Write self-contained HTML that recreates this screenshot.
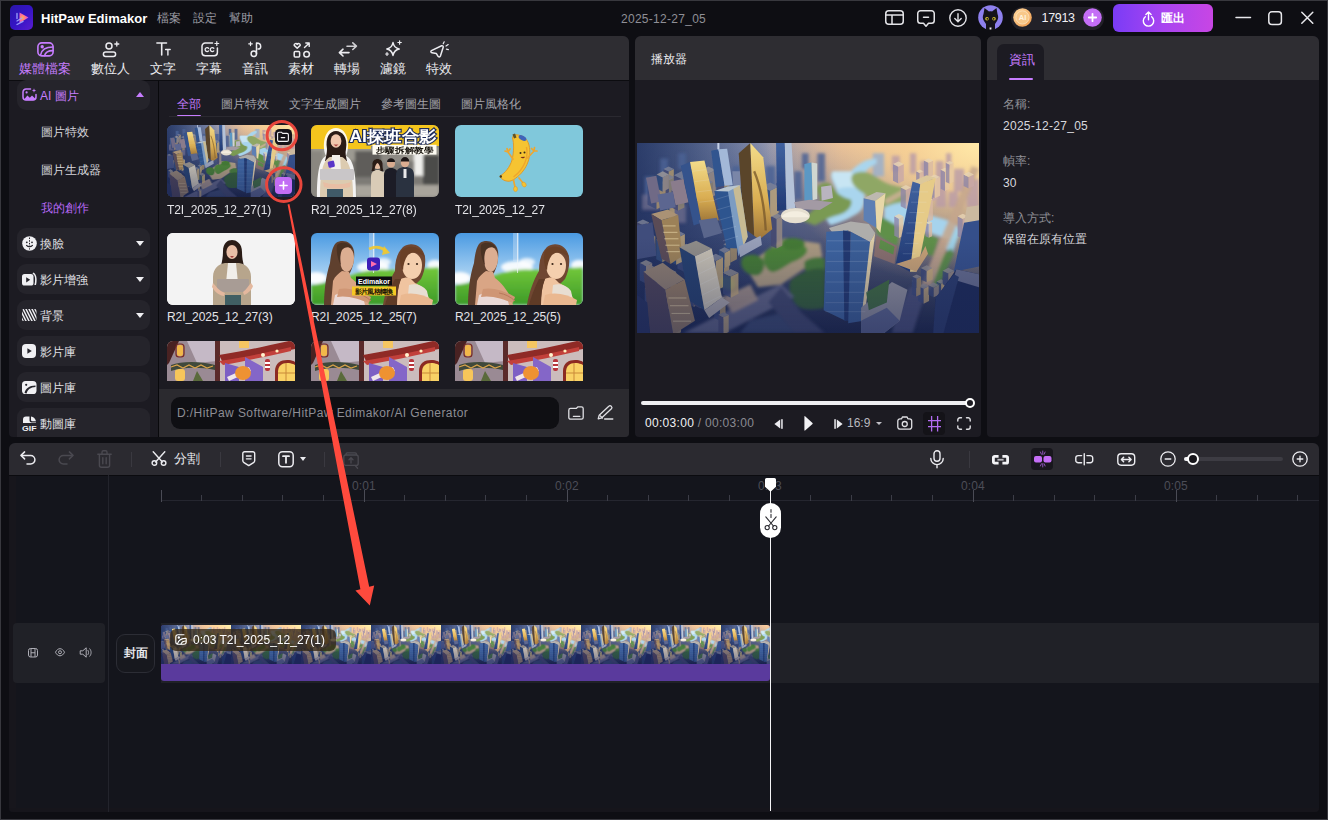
<!DOCTYPE html>
<html lang="zh-Hant">
<head>
<meta charset="utf-8">
<title>HitPaw Edimakor</title>
<style>
*{box-sizing:border-box;margin:0;padding:0}
html,body{width:1328px;height:820px;overflow:hidden;background:#0e0e13}
body{font-family:"Liberation Sans",sans-serif;font-size:12px;color:#e6e6ea;position:relative}
.abs{position:absolute}
.t{position:absolute;white-space:nowrap;line-height:1}
svg{position:absolute;overflow:visible}
.panel{position:absolute;background:#1c1b22;border-radius:6px 6px 4px 4px;overflow:hidden}
.hdr{position:absolute;left:0;top:0;right:0;height:44px;background:#2e2d32}
.sbtn{position:absolute;left:17px;width:133px;height:30px;border-radius:9px;background:#25242b}
.sbtn .t{left:23px;top:9.500px;font-size:12px;color:#e0e0e4}
.cd{position:absolute;left:119px;top:13px;width:0;height:0;border-left:4px solid transparent;border-right:4px solid transparent;border-top:5px solid #f0f0f3}
.thumb{position:absolute;width:128px;height:72px;border-radius:6px;overflow:hidden}
.thumb svg{left:0;top:0}
.tl{position:absolute;font-size:12px;color:#e4e4e8;white-space:nowrap;line-height:1;letter-spacing:-0.07px}
.tab{position:absolute;top:69px;font-size:13px;color:#ececf0;white-space:nowrap;line-height:1;transform:translateX(-50%);top:62px}
.ct{position:absolute;top:98px;font-size:12px;color:#a4a4ab;white-space:nowrap;line-height:1}
.il{position:absolute;left:1003px;font-size:12px;white-space:nowrap;line-height:1}
.rl{position:absolute;top:480px;font-size:12px;letter-spacing:.1px;color:#4c4d57;white-space:nowrap;line-height:1}
</style>
</head>
<body>
<svg width="0" height="0" style="position:absolute">
<defs>
<linearGradient id="cSky" x1="0" y1="0" x2="1" y2="0"><stop offset="0" stop-color="#56709f"/><stop offset=".35" stop-color="#8a92b0"/><stop offset=".6" stop-color="#e3c0a0"/><stop offset="1" stop-color="#ffe9ae"/></linearGradient>
<linearGradient id="cGnd" x1="0" y1="0" x2="0" y2="1"><stop offset="0" stop-color="#566a92" stop-opacity="0"/><stop offset=".35" stop-color="#3a4b7c" stop-opacity=".75"/><stop offset="1" stop-color="#1b2547"/></linearGradient>
<linearGradient id="cLeft" x1="0" y1="0" x2="1" y2="0"><stop offset="0" stop-color="#1d2b58"/><stop offset="1" stop-color="#1d2b58" stop-opacity="0"/></linearGradient>
<radialGradient id="cSun" cx="1" cy="0" r="1"><stop offset="0" stop-color="#ffe9a8"/><stop offset=".35" stop-color="#f8cf92" stop-opacity=".85"/><stop offset="1" stop-color="#f0b98c" stop-opacity="0"/></radialGradient>
<linearGradient id="cVig" x1="0" y1="0" x2="0" y2="1"><stop offset=".5" stop-color="#18224e" stop-opacity="0"/><stop offset="1" stop-color="#18224e" stop-opacity=".45"/></linearGradient><linearGradient id="cGold" x1="0" y1="0" x2="0" y2="1"><stop offset="0" stop-color="#f3dc8a"/><stop offset=".6" stop-color="#d9ad52"/><stop offset="1" stop-color="#9c7438"/></linearGradient>
<linearGradient id="cBlueA" x1="0" y1="0" x2="0" y2="1"><stop offset="0" stop-color="#5a82b8"/><stop offset="1" stop-color="#2a4580"/></linearGradient>
<linearGradient id="cBlueB" x1="0" y1="0" x2="0" y2="1"><stop offset="0" stop-color="#40629f"/><stop offset="1" stop-color="#223a74"/></linearGradient>
<filter id="cB1" x="-5%" y="-5%" width="110%" height="110%"><feGaussianBlur stdDeviation="2.2"/></filter>
<filter id="cB2" x="-10%" y="-10%" width="120%" height="120%"><feGaussianBlur stdDeviation="7"/></filter>
<symbol id="city" viewBox="0 0 1328 738" preserveAspectRatio="none">
<rect width="1328" height="738" fill="url(#cSky)"/>
<rect width="1328" height="738" fill="url(#cGnd)"/>
<rect width="520" height="738" fill="url(#cLeft)" opacity=".75"/>
<rect x="500" width="828" height="560" fill="url(#cSun)"/>
<g filter="url(#cB2)">
  <!-- far hazy skyline left -->
  <path d="M30 130h40v90H30zM90 60h30v120H90zM130 140h50v80h-50zM160 40h30v60h-30zM370 90h30v80h-30zM500 90h36v150h-36zM610 110h30v110h-30zM700 40h30v110h-30zM640 40h26v60h-26z" fill="#4a6194" opacity=".85"/>
  <path d="M20 200h70v60H20zM130 240h60v70h-60zM70 180h50v60H70z" fill="#6b6a8c" opacity=".8"/>
  <!-- hazy right skyline -->
  <path d="M990 50h30v60h-30zM1060 40h24v80h-24zM1100 70h30v60h-30zM1160 70h30v110h-30zM1200 40h20v60h-20zM1230 100h40v90h-40zM1160 170h40v80h-40zM1210 190h36v60h-36zM1290 140h38v90h-38zM1280 190h48v60h-48z" fill="#b89aa8" opacity=".8"/>
  <path d="M915 40h44v90h-44z" fill="#9fb0c8" opacity=".9"/>
  <!-- river -->
  <path d="M930 60c-40 0-70 20-100 50h-70c-20 20 10 50 20 90s-20 60-50 90l20 30c40-10 80-30 110-50s30-70 10-130c10-30 40-50 60-60z" fill="#a9d5ee"/>
  <path d="M760 110h70c20 20 30 40 40 70-30-10-70-10-90 0-10-30-30-50-20-70z" fill="#d0e8f4" opacity=".8"/>
  <path d="M960 250c30-20 60-25 90-15s60 40 100 50 80 20 100 45l-15 60c-30-20-70-30-110-45s-110-20-165-45z" fill="#a6d3ec"/>
  <path d="M1215 330l40 10-30 90-30-20z" fill="#9fd0e6"/>
  <!-- green banks -->
  <path d="M840 120c30-14 60-10 100 20s90 30 120 40l-20 50c-30 0-60 10-80 20-30-20-60-40-90-60s-50-50-30-70z" fill="#8fa765"/>
  <path d="M700 170c20-20 50-20 60 0s30 40 70 50c10 20-10 50-50 60s-70 30-90 40l-50-20c30-30 60-50 70-70s-20-40-10-60z" fill="#7a9a52"/>
  <path d="M930 280c30 10 60 30 90 50l-10 70c-30-10-60-30-80-50z" fill="#5f9049"/>
  <path d="M1110 350c20 5 40 10 60 20l-20 70c-20-5-30-10-50-20z" fill="#5f8f4a"/>
  <path d="M1180 440l40-30 10 20-60 130-20-10z" fill="#5a8a4a"/>
  <!-- right road -->
  <path d="M1300 90l28 10-190 470-40-10z" fill="#c4a68c" opacity=".85"/>
  <path d="M960 220l130-70 8 14-130 76z" fill="#cbb094" opacity=".9"/>
  <!-- plaza -->
  <path d="M420 480l150-110 140 20 10 50-160 110-90 10z" fill="#ab9a80"/>
  <path d="M410 445c30-20 70-10 80 10s0 60-30 60-70-30-50-70z" fill="#457a36"/>
  <path d="M500 420c40-30 120-40 150-20s-10 50-40 60-70 50-90 40-40-50-20-80z" fill="#4d8438"/>
  <path d="M570 375c30-10 70-5 80 10s-20 30-50 30-50-25-30-40z" fill="#447a36"/>
  <path d="M650 460c30-20 60-20 80-10v50c-30 10-60 10-80-10z" fill="#467a3a"/>
  <path d="M600 530c40-30 90-50 130-40v150c-40 10-90 10-110-10s-40-70-20-100z" fill="#355f38"/>
  <path d="M330 520c20-10 40 0 50 20s-10 40-30 30-40-30-20-50z" fill="#4a7a40"/>
  <!-- roads bottom -->
  <path d="M180 738l380-190 50 50-270 140z" fill="#5f6384"/>
  <path d="M330 600l110-50 30 60-100 50z" fill="#a8958a" opacity=".9"/>
  <path d="M400 738l40-50 130-30 90 80z" fill="#3a4870"/>
  <path d="M560 560l80 100 90 78h-120l-100-120z" fill="#3f466c"/>
  <path d="M1000 690l60-130 70-10-60 188h-80z" fill="#4a5078"/>
</g>
<g filter="url(#cB1)" opacity=".8"><path d="M520 284l22 11v115l-22 -11z" fill="#454a70"/><path d="M542 295l22 -11v115l-22 11z" fill="#9a8c84"/><path d="M520 284l22 -11l22 11l-22 11z" fill="#8f8c90"/><path d="M96 547l24 12v68l-24 -12z" fill="#34507f"/><path d="M120 559l24 -12v68l-24 12z" fill="#9a8c84"/><path d="M96 547l24 -12l24 12l-24 12z" fill="#7f8498"/><path d="M42 495l35 17v107l-35 -17z" fill="#3a4a78"/><path d="M77 512l35 -17v107l-35 17z" fill="#9a8c84"/><path d="M42 495l35 -17l35 17l-35 17z" fill="#8f8c90"/><path d="M541 154l20 10v54l-20 -10z" fill="#3a4a78"/><path d="M561 164l20 -10v54l-20 10z" fill="#b59c70"/><path d="M541 154l20 -10l20 10l-20 10z" fill="#7f8498"/><path d="M30 565l25 12v106l-25 -12z" fill="#3a4a78"/><path d="M55 577l25 -12v106l-25 12z" fill="#9a8c84"/><path d="M30 565l25 -12l25 12l-25 12z" fill="#8f8c90"/><path d="M301 601l20 10v60l-20 -10z" fill="#454a70"/><path d="M321 611l20 -10v60l-20 10z" fill="#8f8470"/><path d="M301 601l20 -10l20 10l-20 10z" fill="#a09a98"/><path d="M85 350l25 12v79l-25 -12z" fill="#2f4a7a"/><path d="M110 362l25 -12v79l-25 12z" fill="#a89068"/><path d="M85 350l25 -12l25 12l-25 12z" fill="#8f8c90"/><path d="M110 500l21 10v87l-21 -10z" fill="#454a70"/><path d="M131 510l21 -10v87l-21 10z" fill="#a89068"/><path d="M110 500l21 -10l21 10l-21 10z" fill="#8f8c90"/><path d="M0 308l23 11v56l-23 -11z" fill="#454a70"/><path d="M23 319l23 -11v56l-23 11z" fill="#c2a878"/><path d="M0 308l23 -11l23 11l-23 11z" fill="#7f8498"/><path d="M74 669l30 15v75l-30 -15z" fill="#2f4a7a"/><path d="M104 684l30 -15v75l-30 15z" fill="#8f8470"/><path d="M74 669l30 -15l30 15l-30 15z" fill="#8f8c90"/><path d="M318 430l20 10v102l-20 -10z" fill="#34507f"/><path d="M338 440l20 -10v102l-20 10z" fill="#b59c70"/><path d="M318 430l20 -10l20 10l-20 10z" fill="#8f8c90"/><path d="M103 101l20 10v109l-20 -10z" fill="#454a70"/><path d="M123 111l20 -10v109l-20 10z" fill="#b59c70"/><path d="M103 101l20 -10l20 10l-20 10z" fill="#7f8498"/><path d="M192 548l28 14v74l-28 -14z" fill="#3a4a78"/><path d="M220 562l28 -14v74l-28 14z" fill="#c2a878"/><path d="M192 548l28 -14l28 14l-28 14z" fill="#7f8498"/><path d="M392 209l26 13v103l-26 -13z" fill="#3a4a78"/><path d="M418 222l26 -13v103l-26 13z" fill="#a89068"/><path d="M392 209l26 -13l26 13l-26 13z" fill="#a09a98"/><path d="M311 110l23 11v73l-23 -11z" fill="#454a70"/><path d="M334 121l23 -11v73l-23 11z" fill="#9a8c84"/><path d="M311 110l23 -11l23 11l-23 11z" fill="#7f8498"/><path d="M102 133l22 11v77l-22 -11z" fill="#454a70"/><path d="M124 144l22 -11v77l-22 11z" fill="#8f8470"/><path d="M102 133l22 -11l22 11l-22 11z" fill="#8f8c90"/><path d="M336 393l26 13v59l-26 -13z" fill="#34507f"/><path d="M362 406l26 -13v59l-26 13z" fill="#a89068"/><path d="M336 393l26 -13l26 13l-26 13z" fill="#8f8c90"/><path d="M248 105l29 14v97l-29 -14z" fill="#2f4a7a"/><path d="M277 119l29 -14v97l-29 14z" fill="#9a8c84"/><path d="M248 105l29 -14l29 14l-29 14z" fill="#a09a98"/><path d="M130 585l33 16v67l-33 -16z" fill="#454a70"/><path d="M163 601l33 -16v67l-33 16z" fill="#b59c70"/><path d="M130 585l33 -16l33 16l-33 16z" fill="#7f8498"/><path d="M157 408l34 17v79l-34 -17z" fill="#3a4a78"/><path d="M191 425l34 -17v79l-34 17z" fill="#b59c70"/><path d="M157 408l34 -17l34 17l-34 17z" fill="#8f8c90"/><path d="M201 487l34 17v111l-34 -17z" fill="#34507f"/><path d="M235 504l34 -17v111l-34 17z" fill="#c2a878"/><path d="M201 487l34 -17l34 17l-34 17z" fill="#8f8c90"/><path d="M106 201l20 10v115l-20 -10z" fill="#2f4a7a"/><path d="M126 211l20 -10v115l-20 10z" fill="#b59c70"/><path d="M106 201l20 -10l20 10l-20 10z" fill="#7f8498"/><path d="M300 622l22 11v58l-22 -11z" fill="#3a4a78"/><path d="M322 633l22 -11v58l-22 11z" fill="#b59c70"/><path d="M300 622l22 -11l22 11l-22 11z" fill="#a09a98"/><path d="M75 376l23 11v76l-23 -11z" fill="#34507f"/><path d="M98 387l23 -11v76l-23 11z" fill="#a89068"/><path d="M75 376l23 -11l23 11l-23 11z" fill="#a09a98"/><path d="M255 151l20 10v72l-20 -10z" fill="#2f4a7a"/><path d="M275 161l20 -10v72l-20 10z" fill="#8f8470"/><path d="M255 151l20 -10l20 10l-20 10z" fill="#7f8498"/><path d="M134 184l25 12v67l-25 -12z" fill="#454a70"/><path d="M159 196l25 -12v67l-25 12z" fill="#8f8470"/><path d="M134 184l25 -12l25 12l-25 12z" fill="#7f8498"/><path d="M143 125l34 17v52l-34 -17z" fill="#454a70"/><path d="M177 142l34 -17v52l-34 17z" fill="#8f8470"/><path d="M143 125l34 -17l34 17l-34 17z" fill="#7f8498"/><path d="M319 124l20 10v59l-20 -10z" fill="#454a70"/><path d="M339 134l20 -10v59l-20 10z" fill="#a89068"/><path d="M319 124l20 -10l20 10l-20 10z" fill="#7f8498"/><path d="M318 416l22 11v59l-22 -11z" fill="#34507f"/><path d="M340 427l22 -11v59l-22 11z" fill="#c2a878"/><path d="M318 416l22 -11l22 11l-22 11z" fill="#7f8498"/><path d="M376 135l34 17v66l-34 -17z" fill="#2f4a7a"/><path d="M410 152l34 -17v66l-34 17z" fill="#8f8470"/><path d="M376 135l34 -17l34 17l-34 17z" fill="#8f8c90"/><path d="M484 169l33 16v103l-33 -16z" fill="#34507f"/><path d="M517 185l33 -16v103l-33 16z" fill="#c2a878"/><path d="M484 169l33 -16l33 16l-33 16z" fill="#7f8498"/><path d="M14 481l26 13v51l-26 -13z" fill="#34507f"/><path d="M40 494l26 -13v51l-26 13z" fill="#a89068"/><path d="M14 481l26 -13l26 13l-26 13z" fill="#8f8c90"/><path d="M118 353l34 17v103l-34 -17z" fill="#2f4a7a"/><path d="M152 370l34 -17v103l-34 17z" fill="#c2a878"/><path d="M118 353l34 -17l34 17l-34 17z" fill="#7f8498"/><path d="M85 621l32 16v115l-32 -16z" fill="#34507f"/><path d="M117 637l32 -16v115l-32 16z" fill="#8f8470"/><path d="M85 621l32 -16l32 16l-32 16z" fill="#7f8498"/><path d="M89 582l20 10v79l-20 -10z" fill="#34507f"/><path d="M109 592l20 -10v79l-20 10z" fill="#c2a878"/><path d="M89 582l20 -10l20 10l-20 10z" fill="#7f8498"/><path d="M11 466l24 12v68l-24 -12z" fill="#3a4a78"/><path d="M35 478l24 -12v68l-24 12z" fill="#9a8c84"/><path d="M11 466l24 -12l24 12l-24 12z" fill="#8f8c90"/><path d="M334 504l30 15v82l-30 -15z" fill="#3a4a78"/><path d="M364 519l30 -15v82l-30 15z" fill="#c2a878"/><path d="M334 504l30 -15l30 15l-30 15z" fill="#8f8c90"/><path d="M219 483l23 11v90l-23 -11z" fill="#3a4a78"/><path d="M242 494l23 -11v90l-23 11z" fill="#b59c70"/><path d="M219 483l23 -11l23 11l-23 11z" fill="#8f8c90"/><path d="M41 155l35 17v85l-35 -17z" fill="#3a4a78"/><path d="M76 172l35 -17v85l-35 17z" fill="#a89068"/><path d="M41 155l35 -17l35 17l-35 17z" fill="#a09a98"/><path d="M219 513l26 13v116l-26 -13z" fill="#454a70"/><path d="M245 526l26 -13v116l-26 13z" fill="#8f8470"/><path d="M219 513l26 -13l26 13l-26 13z" fill="#7f8498"/><path d="M76 122l24 12v55l-24 -12z" fill="#2f4a7a"/><path d="M100 134l24 -12v55l-24 12z" fill="#9a8c84"/><path d="M76 122l24 -12l24 12l-24 12z" fill="#a09a98"/><path d="M316 667l20 10v67l-20 -10z" fill="#454a70"/><path d="M336 677l20 -10v67l-20 10z" fill="#c2a878"/><path d="M316 667l20 -10l20 10l-20 10z" fill="#8f8c90"/><path d="M25 362l23 11v68l-23 -11z" fill="#34507f"/><path d="M48 373l23 -11v68l-23 11z" fill="#a89068"/><path d="M25 362l23 -11l23 11l-23 11z" fill="#a09a98"/><path d="M111 638l30 15v97l-30 -15z" fill="#34507f"/><path d="M141 653l30 -15v97l-30 15z" fill="#b59c70"/><path d="M111 638l30 -15l30 15l-30 15z" fill="#8f8c90"/><path d="M182 101l32 16v110l-32 -16z" fill="#34507f"/><path d="M214 117l32 -16v110l-32 16z" fill="#b59c70"/><path d="M182 101l32 -16l32 16l-32 16z" fill="#8f8c90"/><path d="M278 444l28 14v116l-28 -14z" fill="#3a4a78"/><path d="M306 458l28 -14v116l-28 14z" fill="#c2a878"/><path d="M278 444l28 -14l28 14l-28 14z" fill="#7f8498"/><path d="M229 179l26 13v99l-26 -13z" fill="#3a4a78"/><path d="M255 192l26 -13v99l-26 13z" fill="#c2a878"/><path d="M229 179l26 -13l26 13l-26 13z" fill="#a09a98"/><path d="M201 96l26 13v120l-26 -13z" fill="#2f4a7a"/><path d="M227 109l26 -13v120l-26 13z" fill="#c2a878"/><path d="M201 96l26 -13l26 13l-26 13z" fill="#a09a98"/><path d="M1084 110l14 7v53l-14 -7z" fill="#8f86a8"/><path d="M1098 117l14 -7v53l-14 7z" fill="#d9b9a4"/><path d="M1084 110l14 -7l14 7l-14 7z" fill="#e8d4b4"/><path d="M1179 104l17 8v74l-17 -8z" fill="#8f86a8"/><path d="M1196 112l17 -8v74l-17 8z" fill="#e6c8a4"/><path d="M1179 104l17 -8l17 8l-17 8z" fill="#e8d4b4"/><path d="M1114 68l18 9v72l-18 -9z" fill="#8f86a8"/><path d="M1132 77l18 -9v72l-18 9z" fill="#d9b9a4"/><path d="M1114 68l18 -9l18 9l-18 9z" fill="#e8d4b4"/><path d="M999 285l18 9v75l-18 -9z" fill="#8f86a8"/><path d="M1017 294l18 -9v75l-18 9z" fill="#e6c8a4"/><path d="M999 285l18 -9l18 9l-18 9z" fill="#e8d4b4"/><path d="M1120 309l13 6v53l-13 -6z" fill="#8f86a8"/><path d="M1133 315l13 -6v53l-13 6z" fill="#d9b9a4"/><path d="M1120 309l13 -6l13 6l-13 6z" fill="#e8d4b4"/><path d="M1199 77l15 7v74l-15 -7z" fill="#8f86a8"/><path d="M1214 84l15 -7v74l-15 7z" fill="#e6c8a4"/><path d="M1199 77l15 -7l15 7l-15 7z" fill="#e8d4b4"/><path d="M1051 300l15 7v73l-15 -7z" fill="#8f86a8"/><path d="M1066 307l15 -7v73l-15 7z" fill="#c9a8a8"/><path d="M1051 300l15 -7l15 7l-15 7z" fill="#e8d4b4"/><path d="M1245 285l20 10v77l-20 -10z" fill="#8f86a8"/><path d="M1265 295l20 -10v77l-20 10z" fill="#c9a8a8"/><path d="M1245 285l20 -10l20 10l-20 10z" fill="#e8d4b4"/><path d="M1024 173l20 10v73l-20 -10z" fill="#8f86a8"/><path d="M1044 183l20 -10v73l-20 10z" fill="#c9a8a8"/><path d="M1024 173l20 -10l20 10l-20 10z" fill="#e8d4b4"/><path d="M1128 144l21 10v72l-21 -10z" fill="#8f86a8"/><path d="M1149 154l21 -10v72l-21 10z" fill="#c9a8a8"/><path d="M1128 144l21 -10l21 10l-21 10z" fill="#e8d4b4"/><path d="M1111 219l19 9v79l-19 -9z" fill="#8f86a8"/><path d="M1130 228l19 -9v79l-19 9z" fill="#d9b9a4"/><path d="M1111 219l19 -9l19 9l-19 9z" fill="#e8d4b4"/><path d="M1135 132l21 10v73l-21 -10z" fill="#8f86a8"/><path d="M1156 142l21 -10v73l-21 10z" fill="#e6c8a4"/><path d="M1135 132l21 -10l21 10l-21 10z" fill="#e8d4b4"/><path d="M1273 314l16 8v66l-16 -8z" fill="#8f86a8"/><path d="M1289 322l16 -8v66l-16 8z" fill="#c9a8a8"/><path d="M1273 314l16 -8l16 8l-16 8z" fill="#e8d4b4"/><path d="M1038 317l13 6v78l-13 -6z" fill="#8f86a8"/><path d="M1051 323l13 -6v78l-13 6z" fill="#e6c8a4"/><path d="M1038 317l13 -6l13 6l-13 6z" fill="#e8d4b4"/><path d="M994 82l21 10v65l-21 -10z" fill="#8f86a8"/><path d="M1015 92l21 -10v65l-21 10z" fill="#c9a8a8"/><path d="M994 82l21 -10l21 10l-21 10z" fill="#e8d4b4"/><path d="M1268 122l20 10v45l-20 -10z" fill="#8f86a8"/><path d="M1288 132l20 -10v45l-20 10z" fill="#c9a8a8"/><path d="M1268 122l20 -10l20 10l-20 10z" fill="#e8d4b4"/><path d="M1102 486l23 11v44l-23 -11z" fill="#3a4a78"/><path d="M1125 497l23 -11v44l-23 11z" fill="#c2a878"/><path d="M1102 486l23 -11l23 11l-23 11z" fill="#8f8c90"/><path d="M1163 538l18 9v45l-18 -9z" fill="#3a4a78"/><path d="M1181 547l18 -9v45l-18 9z" fill="#c2a878"/><path d="M1163 538l18 -9l18 9l-18 9z" fill="#8f8c90"/><path d="M1092 556l21 10v58l-21 -10z" fill="#3a4a78"/><path d="M1113 566l21 -10v58l-21 10z" fill="#c2a878"/><path d="M1092 556l21 -10l21 10l-21 10z" fill="#8f8c90"/><path d="M1194 551l16 8v36l-16 -8z" fill="#3a4a78"/><path d="M1210 559l16 -8v36l-16 8z" fill="#c2a878"/><path d="M1194 551l16 -8l16 8l-16 8z" fill="#8f8c90"/><path d="M1067 536l17 8v52l-17 -8z" fill="#3a4a78"/><path d="M1084 544l17 -8v52l-17 8z" fill="#a89068"/><path d="M1067 536l17 -8l17 8l-17 8z" fill="#8f8c90"/><path d="M1069 519l17 8v37l-17 -8z" fill="#3a4a78"/><path d="M1086 527l17 -8v37l-17 8z" fill="#a89068"/><path d="M1069 519l17 -8l17 8l-17 8z" fill="#8f8c90"/><path d="M1132 552l20 10v37l-20 -10z" fill="#3a4a78"/><path d="M1152 562l20 -10v37l-20 10z" fill="#9a8c84"/><path d="M1132 552l20 -10l20 10l-20 10z" fill="#8f8c90"/><path d="M1187 496l22 11v53l-22 -11z" fill="#3a4a78"/><path d="M1209 507l22 -11v53l-22 11z" fill="#9a8c84"/><path d="M1187 496l22 -11l22 11l-22 11z" fill="#8f8c90"/></g>
<g filter="url(#cB1)">
  <!-- F2 far-left -->
  <path d="M0 320l60-12 15 130-75 14z" fill="#414d7c"/>
  <path d="M35 135l40-8 20 100-40 8z" fill="#6f6a86"/><path d="M130 150l50-10 20 90-50 12z" fill="#8a7c8c"/>
  <path d="M80 200l60-10 10 60-60 12z" fill="#5c6690"/>
  <!-- A -->
  <path d="M170 88l36-14 44 236-30 10z" fill="#34528c"/>
  <path d="M206 74l56-6 56 232-68 10z" fill="url(#cGold)"/>
  <!-- B -->
  <path d="M312 0h8v30h-8z" fill="#c4d0e8"/>
  <path d="M288 30l28-6 24 142-34 6z" fill="#30548f"/><path d="M316 24l34-2 22 142-32 2z" fill="#a3b8d8"/>
  <path d="M370 110h30l6 60h-32z" fill="#7a86a8"/>
  <!-- C gold tower -->
  <path d="M395 40l45-40 15 360-40-30z" fill="#5a452a"/>
  <path d="M440 0l50 55 35 280-50 40-20-15z" fill="url(#cGold)"/>
  <path d="M455 110c25 60 40 140 45 230" stroke="#7a5a2c" stroke-width="9" fill="none" opacity=".8"/>
  <!-- D -->
  <path d="M540 0h34l6 258-36 6z" fill="url(#cBlueB)"/><path d="M574 0h26l15 252-35 6z" fill="#b4c2d8"/>
  <path d="M650 82l28-6 4 146-32 2z" fill="#5c98c4"/><path d="M678 76l22 4v138l-18 4z" fill="#cfd6d0"/>
  <path d="M715 170l40-6 6 50-44 10z" fill="#b9b4c0"/>
  <path d="M610 230l60-10 90 10-50 30-90-4z" fill="#a39aa4"/>
  <!-- E -->
  <path d="M300 186l50-16 50 240-52-2z" fill="#2f558f"/>
  <path d="M350 170l50-6 30 200-36 76z" fill="#7c9cc2"/>
  <path d="M372 168l28-4 30 200-16 36z" fill="#d9c388" opacity=".8"/>
  <path d="M300 186l50-16 50-6-46 24z" fill="#b9c6d0"/>
  <path d="M395 402l85-42 5 36-85 48z" fill="#98a0b8"/>
  <path d="M240 300l70-10 20 60-70 20z" fill="#5a668c"/>
  <!-- dome -->
  <ellipse cx="615" cy="282" rx="56" ry="30" fill="#e6dfd0"/><path d="M560 288c20-30 90-30 110 0z" fill="#f4eee0"/>
  <!-- F -->
  <path d="M55 276l65-18 40 22-65 20z" fill="#aa9274"/>
  <path d="M55 276l40 24 35 170-35-20z" fill="#5a4c56"/><path d="M95 300l65-20 15 160-45 30z" fill="#9c8158"/>
  <!-- G -->
  <path d="M165 405l65-25 60 30-65 30z" fill="#8f8c88"/>
  <path d="M165 405l60 35 37 210-62-40z" fill="#27406e"/>
  <path d="M225 440l65-30 40 190-68 50z" fill="#c5bfb2"/>
  <path d="M262 650l68-50 30 20-80 60z" fill="#a8a4a8"/>
  <!-- H -->
  <path d="M25 500l75-35 85 65-75 40z" fill="#8c7c70"/>
  <path d="M25 500l85 70 30 168H50z" fill="#4c4258"/>
  <path d="M110 570l75-40 40 160-75 48h-10z" fill="#8e7762"/>
  <path d="M0 590l40 30 10 118H0z" fill="#253360"/>
  <!-- J -->
  <path d="M880 215l50-25 35 5-40 30z" fill="#bdb8b0"/>
  <path d="M880 215l45 10 5 105-50-30z" fill="#5d7fb4"/>
  <path d="M925 225l40-30-20 155-15-20z" fill="#e8d7a8"/>
  <!-- mid low building -->
  <path d="M930 360l80 40-10 70-80-30z" fill="#8a6f6e"/><path d="M945 375l55 28-5 30-55-24z" fill="#5d8c4a"/>
  <!-- K -->
  <path d="M1070 150l55-25 35 10-60 25z" fill="#dcc89c"/>
  <path d="M1070 150l30 10-40 340-55-30z" fill="url(#cBlueB)"/>
  <path d="M1100 160l60-25-60 305-15 60-25 0z" fill="#e6cb88"/>
  <path d="M1005 470l80 30 45-70-10-30-20 40z" fill="#c8a276"/>
  <!-- I front blue -->
  <path d="M745 330l85-25 70 10 25 35-20 35-85-45-60 10z" fill="#aeadab"/>
  <path d="M735 345l85-5-10 350-85-40z" fill="#3e649f"/>
  <path d="M800 340l30 5-5 345-20 0z" fill="#20396f"/>
  <path d="M830 345l75 40-25 305-60 10z" fill="#3a5e98"/>
  <path d="M905 385l20-35-45 350-10-10z" fill="#dccba4"/>
  <!-- low bottom right -->
  <path d="M870 640l120-100 60 30-30 120-60 48h-90z" fill="#8c8c9a"/>
  <path d="M890 580l90-50-10 90-70 30z" fill="#3f6a40"/>
  <path d="M870 690l100-50 50 50-60 48h-90z" fill="#5a648c"/>
  <!-- right edge -->
  <path d="M1280 250l48-8v60l-58 10z" fill="#cbb9a0"/>
  <path d="M1270 310l58-10v180l-98 20z" fill="#34508a"/>
  <path d="M1240 490l88 20v228h-160l-10-130z" fill="#1f2c58"/>
  <path d="M1240 490l88 20v50l-100-30z" fill="#636a8c"/>
  <path d="M1160 600l70-90 20 10-60 218h-40z" fill="#2a3a6c"/>
</g>
<g stroke="#e4ecf8" stroke-width="2" opacity=".3">
  <path d="M738 380h185M737 420h180M736 460h176M735 500h172M734 540h168M733 580h164M732 620h160M731 655h156"/>
  <path d="M1068 190h62M1064 230h60M1058 270h58M1052 310h56M1046 350h54M1040 390h52M1032 430h50"/>
  <path d="M230 470l66-32M238 510l66-32M246 550l66-32M254 590l66-32M262 625l66-32"/>
  <path d="M304 220l52-16M310 260l54-16M318 300l56-16M326 340l58-16M334 380l58-18"/>
  <path d="M215 110l54-7M224 150l56-7M233 190l58-7M242 230l60-7"/>
</g>
<g fill="#f3e2b2" opacity=".55">
  <rect x="100" y="320" width="50" height="4"/><rect x="102" y="345" width="55" height="4"/><rect x="106" y="370" width="55" height="4"/><rect x="110" y="395" width="55" height="4"/><rect x="114" y="420" width="52" height="4"/>
  <rect x="122" y="600" width="70" height="4"/><rect x="128" y="630" width="72" height="4"/><rect x="134" y="660" width="72" height="4"/><rect x="140" y="690" width="70" height="4"/>
</g>
<rect width="1328" height="738" fill="url(#cVig)"/>
</symbol>
</defs>
</svg>

<svg width="0" height="0" style="position:absolute">
<defs>
<filter id="tB" x="-10%" y="-10%" width="120%" height="120%"><feGaussianBlur stdDeviation="0.7"/></filter>
<filter id="tB2" x="-10%" y="-10%" width="120%" height="120%"><feGaussianBlur stdDeviation="1.6"/></filter>
<linearGradient id="gSky" x1="0" y1="0" x2="0" y2="1"><stop offset="0" stop-color="#4a9ae2"/><stop offset=".5" stop-color="#9ccaf0"/><stop offset="1" stop-color="#d0e6f4"/></linearGradient>
<linearGradient id="gHill" x1="0" y1="0" x2="0" y2="1"><stop offset="0" stop-color="#74c83a"/><stop offset="1" stop-color="#3c9a28"/></linearGradient>
<!-- girls pair -->
<symbol id="girls" viewBox="0 0 128 72">
  <rect width="128" height="72" fill="url(#gSky)"/>
  <g filter="url(#tB2)">
    <ellipse cx="5" cy="45" rx="11" ry="6" fill="#fff" opacity=".95"/>
    <ellipse cx="62" cy="34" rx="16" ry="6" fill="#fff" opacity=".9"/><ellipse cx="72" cy="29" rx="8" ry="4" fill="#fff" opacity=".8"/>
    <ellipse cx="124" cy="32" rx="8" ry="5" fill="#fff" opacity=".9"/>
    <path d="M0 52c14-2 30-6 44-11s26-5 38-4 30-2 46-3v38H0z" fill="url(#gHill)"/>
  </g>
  <rect x="58" y="0" width="6" height="28" fill="#e4eef8" opacity=".35"/><rect x="62" y="0" width="1" height="40" fill="#f2f6fa" opacity=".7"/>
  <g filter="url(#tB)">
    <!-- left girl -->
    <path d="M25 10c6-4 16-2 18 8 1 8-1 16-4 22l-8 6-6 26H13c0-14 2-30 6-42 1-8 2-16 6-20z" fill="#5f3f2e"/>
    <path d="M31 14c7-2 12 3 12 11 0 7-3 13-7 14-4 0-7-5-7-12 0-5 0-10 2-13z" fill="#dcae92"/>
    <path d="M26 12c3-3 12-4 16 4-4-3-9-2-11 1-2 4-2 10-1 16-3-6-5-14-4-21z" fill="#4a3024"/>
    <path d="M31 38l7 1 2 6c6 4 12 12 16 20l2 7H20l2-24c2-5 6-8 9-10z" fill="#d9a585"/>
    <path d="M24 62c8-4 20-4 28 2l2 8H22z" fill="#ead9d6"/>
    <path d="M28 56c10-2 22 2 32 8l-2 6c-10-4-22-8-32-6z" fill="#cf9674"/>
    <path d="M44 60c6 1 12 4 16 8" stroke="#b8785c" stroke-width="1" fill="none"/>
    <!-- right girl -->
    <path d="M92 14c8-6 20-2 22 10 1 8-1 16-4 22l-6 6c-8 0-14 4-18 20H72c2-12 6-24 12-34 0-10 2-18 8-24z" fill="#6f4630"/>
    <path d="M95 20c8-3 16 2 16 12 0 8-4 14-10 14s-10-6-10-14c0-5 1-9 4-12z" fill="#f4cfae"/>
    <path d="M90 18c6-7 20-6 24 6-6-5-12-6-17-2-3 4-5 10-5 16-3-6-4-14-2-20z" fill="#6a4028"/>
    <circle cx="97.500" cy="31" r="1.100" fill="#3a2418"/><circle cx="106" cy="31" r="1.100" fill="#3a2418"/>
    <path d="M90 46c4-2 8-2 10 0l4 4c6 2 12 8 14 16l1 6H86c0-10 1-20 4-26z" fill="#f0c4a0"/>
    <path d="M98 52c6-2 14 0 18 6l3 14H96z" fill="#e8ded2"/>
    <path d="M90 62c10-3 22-1 32 5l-1 5H88z" fill="#eab890"/>
    <path d="M84 46c-4 8-8 18-10 26h12c0-10 1-18 4-26z" fill="#5f3a28"/>
  </g>
</symbol>
<!-- xmas house -->
<symbol id="xmas" viewBox="0 0 128 40">
  <rect width="128" height="40" fill="#cbbcbc"/>
  <g filter="url(#tB)">
    <rect x="0" y="0" width="50" height="40" fill="#9a8a94"/>
    <path d="M0 0h12L2 22 0 24z" fill="#4a2422"/>
    <path d="M20 0h30v20L30 22z" fill="#cfc4d2" opacity=".8"/>
    <rect x="48" y="0" width="5" height="40" fill="#5a2c2a"/>
    <path d="M52 14C76 10 100 5 122 0h6v8C106 12 80 18 56 22z" fill="#8f2a26"/>
    <path d="M52 20C78 16 102 11 124 6v4C102 15 78 20 56 24z" fill="#c2413a"/>
    <rect x="10" y="4" width="6" height="11" rx="2" fill="#f2b84a"/><rect x="9" y="3" width="8" height="13" rx="3" fill="none" stroke="#7a2c22" stroke-width="1.2"/>
    <rect x="8" y="28" width="10" height="12" rx="3" fill="#f7c65a"/>
    <rect x="72" y="0" width="10" height="7" fill="#f5c662"/>
    <path d="M4 24c10-4 30-4 44 0v5c-14-3-32-3-44 1z" fill="#3f4a3a"/>
    <path d="M4 26l6-2 6 3 6-3 6 3 6-3 6 3 6-2" stroke="#d9a24a" stroke-width="1.2" fill="none"/>
    <path d="M58 22l14 4v14H58z" fill="#7d5fc4"/>
    <path d="M78 16l18 10v14H78z" fill="#8466c8"/>
    <path d="M60 36l22-10 2 4-22 10z" fill="#f0e6ea"/>
    <ellipse cx="76" cy="32" rx="8" ry="7" fill="#ee9232"/>
    <circle cx="96" cy="14" r="2" fill="#fff5d0"/><circle cx="110" cy="10" r="1.6" fill="#fff1c0"/>
    <rect x="98" y="18" width="5" height="12" rx="2" fill="#b8343a"/><rect x="98" y="21" width="5" height="2" fill="#fff"/><rect x="98" y="25" width="5" height="2" fill="#fff"/>
    <path d="M108 40V30c0-8 6-11 12-11s8 2 8 2v19z" fill="#8c2c22"/>
    <path d="M111 40V31c0-6 4-9 9-9s8 2 8 2v16z" fill="#f9d266"/>
    <path d="M119 22v18M111 32h17" stroke="#c98a3a" stroke-width="1"/>
    <path d="M30 30l6 10h-10z" fill="#5a6a3a"/>
  </g>
</symbol>
</defs>
</svg>

<!-- window border -->
<div class="abs" style="left:0;top:0;width:1328px;height:820px;border:1px solid #38383e;z-index:50;pointer-events:none"></div>

<!-- ===== TITLE BAR ===== -->
<div class="t" style="left:41px;top:12px;font-size:13px;font-weight:bold;color:#fff">HitPaw Edimakor</div>
<div class="t" style="left:157px;top:12px;color:#9c9ca3">檔案</div>
<div class="t" style="left:193px;top:12px;color:#9c9ca3">設定</div>
<div class="t" style="left:229px;top:12px;color:#9c9ca3">幫助</div>
<div class="t" style="left:621px;top:13px;color:#8f8f96;letter-spacing:.28px">2025-12-27_05</div>
<div class="abs" style="left:1011px;top:6.500px;width:93px;height:23px;border-radius:12px;background:#222128"></div>
<div class="t" style="left:1041.500px;top:12px;font-size:12.500px;letter-spacing:-.3px;color:#f0f0f3">17913</div>
<div class="abs" style="left:1113px;top:4px;width:100px;height:28px;border-radius:6px;background:linear-gradient(90deg,#7a3cf6,#a844f0 50%,#c846e4)"></div>
<div class="t" style="left:1161px;top:12px;font-size:12px;font-weight:bold;color:#fff">匯出</div>
<!-- logo -->
<svg style="left:10px;top:5px" width="23" height="25" viewBox="0 0 23 25">
<defs><linearGradient id="lg1" x1="0" y1="0" x2="1" y2="1"><stop offset="0" stop-color="#2a16a8"/><stop offset=".5" stop-color="#3414c4"/><stop offset="1" stop-color="#5a1cd0"/></linearGradient>
<radialGradient id="lg2" cx=".35" cy=".5" r=".7"><stop offset="0" stop-color="#ffb347"/><stop offset=".45" stop-color="#ff6f9a"/><stop offset="1" stop-color="#c64af0"/></radialGradient></defs>
<rect width="23" height="25" rx="5" fill="url(#lg1)"/>
<path d="M9.500 7.500l9 5-9 5.500z" fill="url(#lg2)"/>
<path d="M7 8.500v5M7 16l5-3M7 19.500l6-3.200" stroke="#9fa8ff" stroke-width="1.400" stroke-linecap="round" opacity=".9"/>
</svg>
<!-- layout icon -->
<svg style="left:885px;top:10px" width="19" height="15" viewBox="0 0 19 15" fill="none" stroke="#e4e4e8" stroke-width="1.500"><rect x=".75" y=".75" width="17.500" height="13.500" rx="3"/><path d="M.75 5h17.500M7 5v9.250"/></svg>
<!-- chat icon -->
<svg style="left:917px;top:9.500px" width="18" height="18" viewBox="0 0 18 18" fill="none" stroke="#e4e4e8" stroke-width="1.500" stroke-linejoin="round"><path d="M3.500 .75h11a2.750 2.750 0 0 1 2.750 2.750v7a2.750 2.750 0 0 1-2.750 2.750h-3l-2.500 3-2.500-3h-3A2.750 2.750 0 0 1 .75 10.500v-7A2.750 2.750 0 0 1 3.500 .75z"/><path d="M6.500 7.200h5" stroke-linecap="round"/></svg>
<!-- download -->
<svg style="left:949px;top:8.500px" width="18" height="18" viewBox="0 0 18 18" fill="none" stroke="#e4e4e8" stroke-width="1.400" stroke-linecap="round" stroke-linejoin="round"><circle cx="9" cy="9" r="8.200"/><path d="M9 4.800v7.800M5.800 9.600L9 12.800l3.200-3.200"/></svg>
<!-- avatar -->
<svg style="left:978px;top:5px" width="25" height="25" viewBox="0 0 25 25"><circle cx="12.500" cy="12.500" r="12.300" fill="#8e80ee"/>
<path d="M5.500 9l1-6 4.500 3.500c1-.3 2-.3 3 0L18.500 3l1 6c1 2 1 5-.5 7l-2 3v6h-9v-6l-2-3c-1.500-2-1.500-5-.5-7z" fill="#15131a"/>
<circle cx="9" cy="13.800" r="1.800" fill="#d7c22c"/><circle cx="16" cy="13.800" r="1.800" fill="#d7c22c"/><circle cx="9.300" cy="13.800" r=".9" fill="#15131a"/><circle cx="15.700" cy="13.800" r=".9" fill="#15131a"/>
<path d="M11.500 22.500h2l-.2 2h-1.600z" fill="#f2f2f2"/></svg>
<!-- coin -->
<svg style="left:1013px;top:8px" width="19" height="19" viewBox="0 0 19 19"><defs><linearGradient id="cn" x1="0" y1="0" x2="1" y2="1"><stop offset="0" stop-color="#ffd9a0"/><stop offset="1" stop-color="#f09a4a"/></linearGradient></defs><circle cx="9.500" cy="9.500" r="9.300" fill="url(#cn)"/><circle cx="9.500" cy="9.500" r="6.600" fill="#f8c88a" stroke="#fbe2bd" stroke-width=".8"/><text x="9.500" y="12.400" text-anchor="middle" font-family="Liberation Sans, sans-serif" font-weight="bold" font-size="7.500" fill="#fff3df">AI</text></svg>
<!-- plus circle -->
<svg style="left:1082.500px;top:8px" width="19" height="19" viewBox="0 0 19 19"><circle cx="9.500" cy="9.500" r="9.300" fill="#c46ef6"/><path d="M9.500 5.800v7.400M5.800 9.500h7.400" stroke="#fff" stroke-width="1.800" stroke-linecap="round"/></svg>
<!-- export icon -->
<svg style="left:1142px;top:10.500px" width="13" height="14" viewBox="0 0 14 15" fill="none" stroke="#fff" stroke-width="1.500" stroke-linecap="round" stroke-linejoin="round"><path d="M7 9.500V1.200M4.200 3.800L7 1l2.800 2.800"/><path d="M3.600 6.200A5.600 5.600 0 1 0 10.400 6.200"/></svg>
<!-- window controls -->
<svg style="left:1235px;top:10px" width="80" height="16" viewBox="0 0 80 16" fill="none" stroke="#e8e8ec" stroke-width="1.500" stroke-linecap="round"><path d="M1 7.400h14.500"/><rect x="33.800" y="1.800" width="12.600" height="12.600" rx="3"/><path d="M66.800 2.300l11 11M77.800 2.300l-11 11"/></svg>


<!-- ===== PANELS (backgrounds) ===== -->
<div class="panel" style="left:9px;top:36px;width:620px;height:401px"><div class="hdr"></div>
  <div class="abs" style="left:149px;top:44px;width:1px;height:357px;background:#09090c"></div><div class="abs" style="left:0;top:44px;width:620px;height:1px;background:#0c0c10"></div>
  <div class="abs" style="left:150px;top:353px;width:470px;height:48px;background:#2b2a2f"></div>
</div>
<div class="panel" style="left:635px;top:36px;width:346px;height:401px"><div class="hdr"></div></div>
<div class="panel" style="left:987px;top:36px;width:332px;height:401px"><div class="hdr"></div></div>
<div class="panel" style="left:9px;top:443px;width:1310px;height:369px;background:#14151c">
  <div class="abs" style="left:0;top:0;width:1310px;height:32px;background:#2b2a30"></div><div class="abs" style="left:0;top:32px;width:1310px;height:1px;background:#0b0b0f"></div><div class="abs" style="left:0;top:33px;width:7px;height:336px;background:#17161c"></div><div class="abs" style="left:0;top:365px;width:1310px;height:4px;background:#16151b"></div>
  <div class="abs" style="left:99px;top:32px;width:1px;height:337px;background:#23242c"></div>
  <div class="abs" style="left:152px;top:180px;width:1158px;height:60px;background:#202127"></div>
</div>

<!-- ===== MEDIA TOOLBAR TABS ===== -->
<div class="tab" style="left:45px;color:#c77dff">媒體檔案</div>
<div class="tab" style="left:110px">數位人</div>
<div class="tab" style="left:163px">文字</div>
<div class="tab" style="left:209px">字幕</div>
<div class="tab" style="left:255px">音訊</div>
<div class="tab" style="left:301px">素材</div>
<div class="tab" style="left:347px">轉場</div>
<div class="tab" style="left:393px">濾鏡</div>
<div class="tab" style="left:439px">特效</div>
<!-- tab: media (active) -->
<svg style="left:37px;top:42px" width="17" height="15" viewBox="0 0 17 15" fill="none" stroke="#c77dff" stroke-width="1.600" stroke-linecap="round" stroke-linejoin="round"><rect x=".9" y=".9" width="15.200" height="13" rx="3.800"/><path d="M3.600 12.800C4.600 8 8.500 5 15.800 5M7.500 13.600c.8-3 3.500-5 8.400-5"/><circle cx="5.200" cy="4.800" r=".9" fill="#c77dff"/></svg>
<!-- tab: digital human -->
<svg style="left:102px;top:41px" width="18" height="16" viewBox="0 0 18 16" fill="none" stroke="#ececf0" stroke-width="1.500" stroke-linecap="round" stroke-linejoin="round"><circle cx="7" cy="5" r="3"/><path d="M3.600 11h7.800a2.200 2.200 0 0 1 0 4.400H3.600a2.200 2.200 0 0 1 0-4.400z"/><path d="M14.800 1v4M12.800 3h4" stroke-width="1.300"/></svg>
<!-- tab: text -->
<svg style="left:156px;top:42px" width="15" height="14" viewBox="0 0 15 14" fill="none" stroke="#ececf0" stroke-width="1.600" stroke-linecap="round"><path d="M.9 1h9.600M5.700 1v12"/><path d="M9.600 7.500h4.600M11.900 7.500V13" stroke-width="1.400"/></svg>
<!-- tab: CC -->
<svg style="left:201px;top:41px" width="19" height="16" viewBox="0 0 19 16" fill="none" stroke="#ececf0" stroke-width="1.500" stroke-linecap="round" stroke-linejoin="round"><path d="M11.500 2H4.200A3.200 3.200 0 0 0 1 5.200v6.400a3.200 3.200 0 0 0 3.200 3.200h9a3.200 3.200 0 0 0 3.200-3.200V7"/><path d="M7.600 7.200a2 2 0 1 0 0 2.700M12.800 7.200a2 2 0 1 0 0 2.700" stroke-width="1.300"/><path d="M15.800 .6v3.800M13.900 2.500h3.800" stroke-width="1.200"/></svg>
<!-- tab: audio -->
<svg style="left:248px;top:41px" width="14" height="17" viewBox="0 0 14 17" fill="none" stroke="#ececf0" stroke-width="1.500" stroke-linecap="round" stroke-linejoin="round"><circle cx="5.800" cy="12.800" r="2.700"/><path d="M8.500 12.800V2c1.600 0 4.200.8 4.200 3.400 0 1.600-1.300 2.600-2.600 2.600"/><path d="M2.500 1v3.600M.7 2.800h3.600" stroke-width="1.200"/></svg>
<!-- tab: materials -->
<svg style="left:293px;top:41.500px" width="18" height="16" viewBox="0 0 18 16" fill="none" stroke="#ececf0" stroke-width="1.500" stroke-linecap="round" stroke-linejoin="round"><path d="M4.200 6.200L1.200 3.400a1.600 1.600 0 0 1 3-1 1.600 1.600 0 0 1 3 1z"/><path d="M11.500 5.500L16 1.200M12.800 1h3.400v3.400" stroke-width="1.400"/><rect x="1.200" y="9.600" width="5.400" height="5.400" rx="1"/><circle cx="13.600" cy="12.300" r="2.800"/></svg>
<!-- tab: transition -->
<svg style="left:338px;top:42px" width="20" height="15" viewBox="0 0 20 15" fill="none" stroke="#ececf0" stroke-width="1.600" stroke-linecap="round" stroke-linejoin="round"><path d="M9 4.200h9.400M14.800 .9l3.600 3.300-3.600 3.300" opacity=".85"/><path d="M11 10.600H1.400M5 7.200l-3.600 3.400L5 14"/></svg>
<!-- tab: filter -->
<svg style="left:384px;top:40px" width="19" height="18" viewBox="0 0 19 18" fill="none" stroke="#ececf0" stroke-width="1.500" stroke-linejoin="round" stroke-linecap="round"><path d="M9 2.600c.8 4 2.300 5.600 6.200 6.400-3.900.8-5.400 2.400-6.200 6.400-.8-4-2.300-5.600-6.200-6.400C6.700 8.200 8.200 6.600 9 2.600z"/><path d="M15.600 .8v3.400M13.900 2.500h3.400M3 12.600v2.800M1.600 14h2.800" stroke-width="1.200"/></svg>
<!-- tab: effects -->
<svg style="left:429px;top:40.500px" width="21" height="17" viewBox="0 0 21 17" fill="none" stroke="#ececf0" stroke-width="1.500" stroke-linejoin="round" stroke-linecap="round"><path d="M2.400 9.600L12.600 4.800c1-.4 1.900.4 1.600 1.400L11.400 15c-.4 1.100-1.900 1.200-2.500.2L7.400 12.600 3 11.800c-1.200-.2-1.600-1.600-.6-2.200z"/><path d="M14.200 2.800l1-2M17 5l2.200-1.400M17.400 8.200l2 .4" stroke-width="1.200"/></svg>


<!-- ===== SIDEBAR ===== -->
<div class="sbtn" style="top:80px"><div class="t" style="color:#c77dff">AI 圖片</div><div class="cd" style="border-top:none;border-bottom:5px solid #c77dff;top:12px"></div></div>
<div class="t" style="left:41px;top:126px;font-size:12px;color:#d6d6db">圖片特效</div>
<div class="t" style="left:41px;top:164px;font-size:12px;color:#d6d6db">圖片生成器</div>
<div class="t" style="left:41px;top:202px;font-size:12px;color:#b768f5">我的創作</div>
<div class="sbtn" style="top:228px"><div class="t">換臉</div><div class="cd"></div></div>
<div class="sbtn" style="top:264px"><div class="t">影片增強</div><div class="cd"></div></div>
<div class="sbtn" style="top:300px"><div class="t">背景</div><div class="cd"></div></div>
<div class="sbtn" style="top:336px"><div class="t">影片庫</div></div>
<div class="sbtn" style="top:372px"><div class="t">圖片庫</div></div>
<div class="sbtn" style="top:408px;height:29px;border-radius:9px 9px 0 0"><div class="t">動圖庫</div></div>
<!-- side: AI image -->
<svg style="left:22px;top:88px" width="15" height="13" viewBox="0 0 15 13"><path d="M8.500 1H4a3 3 0 0 0-3 3v5a3 3 0 0 0 3 3h7a3 3 0 0 0 3-3V6.500" fill="none" stroke="#c77dff" stroke-width="1.500" stroke-linecap="round"/><path d="M2 11.500l3.400-4 2.400 2.200 2.200-2.200 3.400 3.200c-.4.900-1.300 1.500-2.400 1.500H4c-.9 0-1.600-.3-2-.7z" fill="#c77dff"/><circle cx="4.600" cy="4.400" r="1.100" fill="#c77dff"/><path d="M12 .2l.6 1.700 1.700.6-1.700.6-.6 1.700-.6-1.700-1.700-.6 1.700-.6z" fill="#c77dff"/></svg>
<!-- side: face swap -->
<svg style="left:22px;top:236px" width="15" height="15" viewBox="0 0 15 15"><circle cx="7.500" cy="7.500" r="7.300" fill="#f0f0f3"/><path d="M7.500 1.500v12" stroke="#25242b" stroke-width="1" stroke-dasharray="1.500 1.200"/><circle cx="4.800" cy="6.300" r=".9" fill="#25242b"/><circle cx="10" cy="6.300" r=".9" fill="#25242b"/><path d="M4.500 9.300c1.600 1.800 4.400 1.800 6 0" stroke="#25242b" stroke-width="1.100" fill="none" stroke-linecap="round"/></svg>
<!-- side: video enhance -->
<svg style="left:22px;top:272px" width="15" height="14" viewBox="0 0 15 14"><rect x="0" y="2" width="11.500" height="11.500" rx="2.600" fill="#f0f0f3"/><path d="M4.200 5.200l4 2.600-4 2.600z" fill="#25242b"/><path d="M11.200 .6c2 .8 3.200 3 3.400 6.200.1 2.400-.2 4.600-.6 6.200h-1.600c.5-2 .8-4 .7-6.200-.1-2.600-1-4.400-2.500-5z" fill="#f0f0f3"/></svg>
<!-- side: background -->
<svg style="left:22px;top:309px" width="15" height="12" viewBox="0 0 15 12"><defs><clipPath id="bgc"><rect width="14.500" height="12" rx="1.500"/></clipPath></defs><g clip-path="url(#bgc)" stroke="#e8e8ec" stroke-width="1.500"><path d="M-3 -2l8 16M0 -2l8 16M3 -2l8 16M6 -2l8 16M9 -2l8 16M12 -2l8 16M-6 -2l8 16"/></g></svg>
<!-- side: video lib -->
<svg style="left:22px;top:344px" width="14" height="14" viewBox="0 0 14 14"><rect width="14" height="14" rx="4" fill="#f0f0f3"/><path d="M5.400 4.200l4.400 2.800-4.400 2.800z" fill="#25242b"/></svg>
<!-- side: image lib -->
<svg style="left:22px;top:380.500px" width="15" height="13" viewBox="0 0 15 13"><rect width="14.500" height="13" rx="3.600" fill="#f0f0f3"/><path d="M2.500 12c1-4.500 4.500-7.300 11-7.500v1.600C8.500 6.400 5.600 8.600 4.600 12.500z" fill="#25242b"/><path d="M6.400 12.500c.9-2.400 3-4 7.300-4.200v1.500c-3 .2-4.700 1.100-5.500 2.900z" fill="#25242b" opacity=".0"/><circle cx="4.200" cy="3.800" r="1.100" fill="#25242b"/></svg>
<!-- side: gif lib -->
<svg style="left:22px;top:416px" width="15" height="15" viewBox="0 0 15 15"><path d="M1 7V3.500A3 3 0 0 1 4 .5h3.500v4a2 2 0 0 0 2 2H14V7z" fill="#f0f0f3"/><path d="M9 .5c2.600.5 4.400 2.200 5 4.800h-3.600A1.400 1.400 0 0 1 9 3.900z" fill="#f0f0f3"/><text x="0" y="14.600" font-family="Liberation Sans, sans-serif" font-weight="bold" font-size="7.200" fill="#f0f0f3" textLength="14.500" lengthAdjust="spacingAndGlyphs">GIF</text></svg>


<!-- ===== CONTENT TABS ===== -->
<div class="ct" style="left:177px;color:#c77dff">全部</div>
<div class="abs" style="left:177px;top:115px;width:24px;height:2px;background:#c77dff;border-radius:1px"></div>
<div class="abs" style="left:169px;top:116px;width:452px;height:1px;background:#2a2930"></div>
<div class="ct" style="left:221px">圖片特效</div>
<div class="ct" style="left:289px">文字生成圖片</div>
<div class="ct" style="left:381px">參考圖生圖</div>
<div class="ct" style="left:461px">圖片風格化</div>

<!-- ===== THUMBNAILS ===== -->
<div class="thumb" id="th1" style="left:167px;top:125px"><svg width="128" height="72"><use href="#city" width="128" height="72"/></svg></div>
<div class="thumb" id="th2" style="left:311px;top:125px"><svg width="128" height="72" viewBox="0 0 128 72">
<rect width="128" height="72" fill="#7d7b76"/>
<g filter="url(#tB2)"><rect x="0" y="22" width="128" height="14" fill="#9c9a92"/><rect x="44" y="26" width="26" height="26" fill="#5f5d5a"/><rect x="70" y="24" width="22" height="14" fill="#8d8a84"/><rect x="103" y="27" width="10" height="24" fill="#efefec"/><rect x="112" y="30" width="16" height="30" fill="#4c4b4a"/><rect x="44" y="60" width="84" height="12" fill="#a9a59c"/><rect x="0" y="26" width="12" height="46" fill="#8a8780"/></g>
<rect width="128" height="21" fill="#f4c51d"/><path d="M0 21h60v3H0z" fill="#f4c51d"/>
<g filter="url(#tB)">
 <path d="M60 72V52c0-5 3-7 6.500-7s6.500 2 6.500 7v20z" fill="#d9cbb6"/><circle cx="66.500" cy="40" r="4" fill="#e6bda2"/><path d="M61.500 40c-1-8 11-8 10 0 0 3 1 6 1 6h-3c0-3-1-7-3-8-2 1-3 5-3 8h-3s1-3 1-6z" fill="#2a1d18"/>
 <path d="M66 50l12-6 1 2-11 7z" fill="#d9cbb6"/>
 <path d="M73 72V50c0-5 3-7 7-7s7 2 7 7v22z" fill="#1d1e25"/><circle cx="80" cy="38.500" r="4" fill="#d8ab8f"/><path d="M76 37c0-5 8-5 8 0z" fill="#1c1614"/>
 <path d="M85 72V50c0-6 4-8 9-8s9 2 9 8v22z" fill="#2a3140"/><circle cx="94" cy="38" r="4.200" fill="#dbad91"/><path d="M89.800 36.500c0-6 8.400-6 8.400 0z" fill="#1c1614"/>
 <rect x="92.500" y="44" width="3" height="9" fill="#e9e9ea"/>
 <path d="M6 72c0-22 2-38 9-41-4-8-3-28 10-28s14 20 10 28c8 3 10 19 10 41z" fill="#fff" opacity=".9"/>
 <path d="M16 24c-2-12 3-18 9-18s12 6 10 18c-1 4 0 8 1 12H14c1-4 2-8 2-12z" fill="#2b1c17"/>
 <ellipse cx="25" cy="16" rx="5.400" ry="6.800" fill="#efc7ad"/><path d="M22.500 19.500h5l-2.500 2z" fill="#b04a44"/>
 <path d="M9 72c0-22 2-36 10-40h12c8 4 11 18 11 40z" fill="#dccbb0"/>
 <path d="M21 30h8l1 16h-10z" fill="#f4f0ea"/>
 <rect x="9" y="44" width="34" height="11" rx="1" fill="#c9c6c8"/>
 <path d="M12 57c8 3 20 3 28 0l-1 5c-8 2-18 2-26 0z" fill="#e8bea4"/>
 <rect x="17" y="36" width="6.500" height="6.500" rx="1.500" fill="#5a35c8" transform="rotate(-12 20 39)"/>
 <path d="M16 72V64h16v8z" fill="#3f5a68"/>
</g>
<text x="38.500" y="16.500" font-family="Liberation Sans, sans-serif" font-weight="bold" font-size="16" fill="#fff" stroke="#1d2b5a" stroke-width="2.200" paint-order="stroke" textLength="87" lengthAdjust="spacingAndGlyphs">AI探班合影</text>
<rect x="61.500" y="19.800" width="64" height="9.800" fill="#fdfbf2"/>
<text x="64.500" y="27.800" font-family="Liberation Sans, sans-serif" font-weight="bold" font-size="8" fill="#16120c" textLength="58" lengthAdjust="spacingAndGlyphs">步驟拆解教學</text>
</svg></div>
<div class="thumb" id="th3" style="left:455px;top:125px;background:#80c8db"><svg width="128" height="72" viewBox="0 0 128 72"><g filter="url(#tB)">
<path d="M58.500 10C65 9 72 12 74 20C77 33 71 47 58 55C53 58 46 55 45 51C50 48 55 42 57 35C59 27 59 18 57.500 13Z" fill="#f6c431" stroke="#e09a2a" stroke-width="1"/>
<path d="M71.500 22c2 10-2 22-13 30" stroke="#ee9e2c" stroke-width="1.400" fill="none" opacity=".8"/>
<path d="M57.500 9.500l2.500-1 1.500 4-2.500 1z" fill="#5f5228"/><circle cx="45.800" cy="51.500" r="1.200" fill="#4a3c1c"/>
<ellipse cx="67.500" cy="13" rx="4.200" ry="2.200" transform="rotate(28 67.500 13)" fill="#3f63b8"/>
<path d="M58 34l-5-7M53 27l-3-1M53 27l-1-3.500M53 27l2-3" stroke="#efa62f" stroke-width="1.700" stroke-linecap="round" fill="none"/>
<path d="M72.500 33l6.500-7M79 26l3 0M79 26l.5-3.500M79 26l-2.500-2.500" stroke="#efa62f" stroke-width="1.700" stroke-linecap="round" fill="none"/>
<path d="M58.500 55l1.500 7M64 53l4 5" stroke="#efa62f" stroke-width="1.700" stroke-linecap="round"/>
<ellipse cx="60.500" cy="64" rx="2" ry="2.600" fill="#f6c431" stroke="#e09a2a" stroke-width=".6"/><ellipse cx="69" cy="59.500" rx="2" ry="2.600" transform="rotate(-30 69 59.500)" fill="#f6c431" stroke="#e09a2a" stroke-width=".6"/>
<circle cx="65.500" cy="28" r="1" fill="#3a2a18"/><circle cx="69.500" cy="27.500" r="1" fill="#3a2a18"/><path d="M65.500 32c1.500 1.800 3.500 1.600 4.500-.3z" fill="#7a2c1c"/>
</g></svg></div>
<div class="thumb" id="th4" style="left:167px;top:233px;background:#f2f2f2"><svg width="128" height="72" viewBox="0 0 128 72"><rect width="128" height="72" fill="#f3f3f3"/><g filter="url(#tB)">
<path d="M56 18c0-8 5-11 9-11s10 3 10 12c0 6 1 10 2 14H54c1-5 2-9 2-15z" fill="#2a1c19"/>
<ellipse cx="65" cy="19" rx="5.600" ry="7" fill="#e9bfa6"/><path d="M63 23h4l-2 2z" fill="#a3413c"/>
<path d="M46 72V44c0-9 6-13 12-14h14c6 1 12 5 12 14v28z" fill="#b7a58c"/>
<path d="M61 30h8l2 20H59z" fill="#f1eee9"/>
<path d="M58 72V62h16v10z" fill="#3f5f64"/>
<rect x="50" y="46" width="32" height="13" rx="1" fill="#a89c95"/>
<path d="M46 50c3 3 6 8 12 10l-1 3c-7-1-10-6-12-9zM84 50c-3 3-4 6-8 9l1 3c5-2 8-6 9-9z" fill="#e4b89e"/>
</g></svg></div>
<div class="thumb" id="th5" style="left:311px;top:233px"><svg width="128" height="72"><use href="#girls" width="128" height="72"/>
<path d="M58 16c6-3 12-2 17 2" stroke="#f3c92c" stroke-width="2.600" fill="none" opacity=".9"/><path d="M73 13l6 7-8 2z" fill="#f3c92c" opacity=".9"/>
<rect x="56" y="24.500" width="13" height="13" rx="3" fill="#3d1fb8"/><path d="M60 28l6 3-6 3z" fill="#ff6fae"/>
<rect x="45" y="43.500" width="36" height="9" fill="#0d0d10"/><text x="63" y="50.800" text-anchor="middle" font-family="Liberation Sans, sans-serif" font-weight="bold" font-size="7" fill="#fff">Edimakor</text>
<rect x="41" y="53.500" width="44" height="9" fill="#f5c824"/><text x="63" y="60.800" text-anchor="middle" font-family="Liberation Sans, sans-serif" font-weight="bold" font-size="6.500" fill="#1c1608" textLength="38">影片風格轉換</text>
</svg></div>
<div class="thumb" id="th6" style="left:455px;top:233px"><svg width="128" height="72"><use href="#girls" width="128" height="72"/></svg></div>
<div class="thumb" id="th7" style="left:167px;top:341px;height:40px;border-radius:6px 6px 0 0"><svg width="128" height="40"><use href="#xmas" width="128" height="40"/></svg></div>
<div class="thumb" id="th8" style="left:311px;top:341px;height:40px;border-radius:6px 6px 0 0"><svg width="128" height="40"><use href="#xmas" width="128" height="40"/></svg></div>
<div class="thumb" id="th9" style="left:455px;top:341px;height:40px;border-radius:6px 6px 0 0"><svg width="128" height="40"><use href="#xmas" width="128" height="40"/></svg></div>
<div class="tl" style="left:167px;top:204px">T2I_2025_12_27(1)</div>
<div class="tl" style="left:311px;top:204px">R2I_2025_12_27(8)</div>
<div class="tl" style="left:455px;top:204px">T2I_2025_12_27</div>
<div class="tl" style="left:167px;top:311px">R2I_2025_12_27(3)</div>
<div class="tl" style="left:311px;top:311px">R2I_2025_12_25(7)</div>
<div class="tl" style="left:455px;top:311px">R2I_2025_12_25(5)</div>

<!-- path bar -->
<div class="abs" style="left:171px;top:397px;width:388px;height:32px;border-radius:9px;background:#0f0f13"></div>
<div class="t" style="left:177px;top:407px;color:#8d8d94;letter-spacing:.42px">D:/HitPaw Software/HitPaw Edimakor/AI Generator</div>
<!-- folder -->
<svg style="left:568px;top:406px" width="16" height="14" viewBox="0 0 16 14" fill="none" stroke="#e0e0e4" stroke-width="1.300" stroke-linejoin="round" stroke-linecap="round"><path d="M.8 4.200A1.800 1.800 0 0 1 2.600 2.400h5.600l1.800-1.600h3.400a1.800 1.800 0 0 1 1.800 1.800v8.800a1.800 1.800 0 0 1-1.800 1.800H2.600A1.800 1.800 0 0 1 .8 11.400z"/><path d="M5.400 10.400h6.400"/></svg>
<!-- pen -->
<svg style="left:597px;top:405px" width="17" height="16" viewBox="0 0 17 16" fill="none" stroke="#e0e0e4" stroke-width="1.300" stroke-linejoin="round" stroke-linecap="round"><path d="M1.200 13.800l1-3.600 9.600-9a1.700 1.700 0 0 1 2.400 0l.2.200a1.700 1.700 0 0 1 0 2.400l-9.600 9z"/><path d="M3 10.600l2.400 2.400"/><path d="M7.600 14h8.200"/></svg>


<!-- ===== PLAYER ===== -->
<div class="t" style="left:651px;top:53px;font-size:12px;color:#ececf0">播放器</div>
<div class="abs" id="bigimg" style="left:637px;top:143px;width:342px;height:190px;overflow:hidden"><svg width="342" height="190" style="left:0;top:0"><use href="#city" width="342" height="190"/></svg></div>
<div class="abs" style="left:641px;top:401px;width:330px;height:4px;border-radius:2px;background:#efeff2"></div>
<div class="abs" style="left:965px;top:398px;width:10px;height:10px;border-radius:5px;background:#1c1b22;border:2px solid #fff"></div>
<div class="t" style="left:645px;top:417px;color:#f2f2f5;letter-spacing:.3px">00:03:00 <span style="color:#8b8b92">/ 00:03:00</span></div>
<div class="t" style="left:847px;top:417px;color:#b9b9bf">16:9</div>
<!-- prev frame -->
<svg style="left:774px;top:418.500px" width="9" height="10" viewBox="0 0 9 10"><path d="M6.200 .4v9.200L.4 5z" fill="#ececf0"/><rect x="7.200" y=".2" width="1.500" height="9.600" fill="#ececf0"/></svg>
<!-- play -->
<svg style="left:804px;top:415.500px" width="9" height="15" viewBox="0 0 9 15"><path d="M.4 .6c0-.4.400-.6.700-.4l7.400 6.700c.3.300.3.800 0 1.100l-7.400 6.600c-.3.300-.7 0-.7-.4z" fill="#f2f2f5"/></svg>
<!-- next frame -->
<svg style="left:833.500px;top:418.500px" width="9" height="10" viewBox="0 0 9 10"><path d="M2.800 .4v9.200L8.600 5z" fill="#ececf0"/><rect x=".3" y=".2" width="1.500" height="9.600" fill="#ececf0"/></svg>
<div class="abs" style="left:875.500px;top:421.500px;width:0;height:0;border-left:3px solid transparent;border-right:3px solid transparent;border-top:3.500px solid #c0c0c6"></div>
<!-- camera -->
<svg style="left:896.500px;top:416px" width="15.500" height="14" viewBox="0 0 15.500 14" fill="none" stroke="#e0e0e4" stroke-width="1.300" stroke-linejoin="round"><path d="M3 2.800h1.600L5.400 1h4.700l.8 1.800h1.600a2.200 2.200 0 0 1 2.200 2.200v6a2.200 2.200 0 0 1-2.200 2.200H3A2.200 2.200 0 0 1 .8 11V5A2.200 2.200 0 0 1 3 2.800z"/><circle cx="7.750" cy="8" r="2.500"/></svg>
<!-- grid -->
<div class="abs" style="left:922.500px;top:412px;width:22px;height:23px;border-radius:4px;background:#141318"></div>
<svg style="left:927.500px;top:415.500px" width="13" height="15.500" viewBox="0 0 13 15.500" stroke="#b36bf2" stroke-width="1.300"><path d="M3.600 0v15.500M9.600 0v15.500M0 4.600h13M0 10.600h13"/></svg>
<!-- fullscreen -->
<svg style="left:957px;top:417px" width="14" height="13" viewBox="0 0 14 13" fill="none" stroke="#e0e0e4" stroke-width="1.400" stroke-linecap="round"><path d="M.8 4V2.800A2 2 0 0 1 2.800 .8H4.500M9.500 .8h1.700a2 2 0 0 1 2 2V4M13.200 9v1.200a2 2 0 0 1-2 2H9.500M4.500 12.200H2.800a2 2 0 0 1-2-2V9"/></svg>


<!-- ===== INFO ===== -->
<div class="abs" style="left:997px;top:44px;width:47px;height:36px;border-radius:7px 7px 0 0;background:#1c1b22"></div>
<div class="t" style="left:1009px;top:54px;font-size:12.5px;color:#c77dff">資訊</div>
<div class="abs" style="left:1009px;top:78px;width:24px;height:2px;background:#c77dff;border-radius:1px"></div>
<div class="il" style="top:98px;color:#8f8f96">名稱:</div>
<div class="il" style="top:120px;color:#d8d8dd;letter-spacing:.28px">2025-12-27_05</div>
<div class="il" style="top:155px;color:#8f8f96">幀率:</div>
<div class="il" style="top:177px;color:#d8d8dd">30</div>
<div class="il" style="top:212px;color:#8f8f96">導入方式:</div>
<div class="il" style="top:233px;color:#d8d8dd">保留在原有位置</div>

<!-- ===== TIMELINE CONTENT ===== -->
<div class="t" style="left:174px;top:453px;font-size:12.5px;color:#ececf0">分割</div>
<!-- undo -->
<svg style="left:19.500px;top:451px" width="16" height="14" viewBox="0 0 16 14" fill="none" stroke="#ececf0" stroke-width="1.500" stroke-linecap="round" stroke-linejoin="round"><path d="M4.600 .9L1 4.400l3.600 3.500"/><path d="M1.400 4.400h9.200a4.300 4.300 0 0 1 0 8.600H7"/></svg>
<!-- redo -->
<svg style="left:58px;top:451px" width="16" height="14" viewBox="0 0 16 14" fill="none" stroke="#4a4950" stroke-width="1.500" stroke-linecap="round" stroke-linejoin="round"><path d="M11.400 .9L15 4.400l-3.600 3.500"/><path d="M14.600 4.400H5.400a4.300 4.300 0 0 0 0 8.600H9"/></svg>
<!-- trash -->
<svg style="left:96.500px;top:449.500px" width="15" height="18" viewBox="0 0 15 18" fill="none" stroke="#4a4950" stroke-width="1.400" stroke-linecap="round" stroke-linejoin="round"><path d="M.8 4.200h13.400M5 4V2.200A1.400 1.400 0 0 1 6.400 .8h2.200A1.400 1.400 0 0 1 10 2.200V4M2.400 4.400v10.800a2 2 0 0 0 2 2h6.200a2 2 0 0 0 2-2V4.400M5.800 7.800v6M9.200 7.800v6"/></svg>
<div class="abs" style="left:131px;top:452px;width:1px;height:15px;background:#3a3940"></div>
<!-- scissors -->
<svg style="left:150.500px;top:451px" width="16" height="15" viewBox="0 0 16 15" fill="none" stroke="#ececf0" stroke-width="1.400" stroke-linecap="round"><path d="M2.200 .8l9.200 10.200M13.800 .8L4.600 11"/><circle cx="3.400" cy="12" r="2.300"/><circle cx="12.600" cy="12" r="2.300"/></svg>
<div class="abs" style="left:220px;top:452px;width:1px;height:15px;background:#3a3940"></div>
<!-- marker -->
<svg style="left:241.500px;top:450.500px" width="13.500" height="15.500" viewBox="0 0 13.500 15.500" fill="none" stroke="#ececf0" stroke-width="1.400" stroke-linejoin="round" stroke-linecap="round"><path d="M2.600 .8h8.300a1.800 1.800 0 0 1 1.800 1.800v6.800a2.600 2.600 0 0 1-1.200 2.200l-4.750 3-4.750-3A2.600 2.600 0 0 1 .8 9.400V2.600A1.800 1.800 0 0 1 2.600 .8z"/><path d="M4.400 5h4.700M4.400 7.800h4.700" stroke-width="1.300"/></svg>
<!-- T box -->
<svg style="left:278px;top:450.500px" width="16" height="16.500" viewBox="0 0 16 16.500" fill="none" stroke="#ececf0" stroke-width="1.500" stroke-linecap="round"><rect x=".8" y=".8" width="14.400" height="14.900" rx="3.600"/><path d="M5 5.200h6M8 5.200v6.600" stroke-width="1.800"/></svg>
<div class="abs" style="left:299.500px;top:457px;width:0;height:0;border-left:3.500px solid transparent;border-right:3.500px solid transparent;border-top:4.500px solid #ececf0"></div>
<div class="abs" style="left:324px;top:452px;width:1px;height:15px;background:#3a3940"></div>
<!-- dim overlay icon -->
<svg style="left:343px;top:451.500px" width="16" height="17" viewBox="0 0 16 17" fill="none" stroke="#4a4950" stroke-width="1.300" stroke-linejoin="round" stroke-linecap="round"><path d="M3 2.600V2A1.200 1.200 0 0 1 4.200 .8h8a1.200 1.200 0 0 1 1.200 1.200v.6"/><rect x=".8" y="3" width="14.400" height="10.400" rx="2"/><path d="M8 11V6M6 7.800l2-2 2 2"/><path d="M12 13.400l2.600 2.800"/></svg>
<!-- mic -->
<svg style="left:930px;top:449.500px" width="14" height="18.500" viewBox="0 0 14 18.500" fill="none" stroke="#ececf0" stroke-width="1.400" stroke-linecap="round"><rect x="4" y=".8" width="6" height="10.400" rx="3"/><path d="M.8 8.400a6.200 6.200 0 0 0 12.400 0M7 14.800v3"/></svg>
<div class="abs" style="left:969px;top:451px;width:1px;height:17px;background:#3a3940"></div>
<!-- link -->
<svg style="left:991.500px;top:454.500px" width="17" height="9.500" viewBox="0 0 17 9.500" fill="none" stroke="#f4f4f7" stroke-width="2.800" stroke-linejoin="round"><path d="M6.600 1.400H2.600A1.200 1.200 0 0 0 1.400 2.600v4.300a1.200 1.200 0 0 0 1.200 1.200h4M10.400 1.400h4a1.200 1.200 0 0 1 1.200 1.200v4.300a1.200 1.200 0 0 1-1.200 1.200h-4"/><path d="M5.400 4.750h6.200" stroke-width="1.800" stroke="#b8b8be"/></svg>
<!-- snap -->
<div class="abs" style="left:1031px;top:447.500px;width:22px;height:22px;border-radius:4px;background:#18171d"></div>
<svg style="left:1033.500px;top:449.500px" width="17.500" height="18" viewBox="0 0 17.500 18"><rect x="0" y="6" width="8" height="6.400" rx="2" fill="#c46ef6"/><rect x="9.500" y="6" width="8" height="6.400" rx="2" fill="#c46ef6"/><path d="M8.750 1v3.400M6.400 2l1 2.200M11.100 2l-1 2.200M8.750 17v-3.400M6.400 16l1-2.200M11.100 16l-1-2.200" stroke="#9a59c8" stroke-width=".9" stroke-linecap="round"/></svg>
<!-- split -->
<svg style="left:1075px;top:452.500px" width="18.500" height="12.500" viewBox="0 0 18.500 12.500" fill="none" stroke="#ececf0" stroke-width="1.400" stroke-linecap="round" stroke-linejoin="round"><path d="M9.250 .7v11.100"/><path d="M6.600 2.600H3.200A2.400 2.400 0 0 0 .8 5v2.400a2.400 2.400 0 0 0 2.400 2.400h3.400M11.900 2.600h3.400A2.400 2.400 0 0 1 17.700 5v2.400a2.400 2.400 0 0 1-2.400 2.400h-3.400"/></svg>
<!-- fit -->
<svg style="left:1117px;top:452.500px" width="18.500" height="13" viewBox="0 0 18.500 13" fill="none" stroke="#ececf0" stroke-width="1.400" stroke-linecap="round" stroke-linejoin="round"><rect x=".8" y=".8" width="16.900" height="11.400" rx="3.400"/><path d="M4.600 6.500h9.300M6.600 4.300L4.400 6.500l2.200 2.200M11.900 4.300l2.200 2.200-2.200 2.200" stroke-width="1.500"/></svg>
<!-- zoom minus -->
<svg style="left:1160px;top:451px" width="16" height="16" viewBox="0 0 16 16" fill="none" stroke="#ececf0" stroke-width="1.300" stroke-linecap="round"><circle cx="8" cy="8" r="7.200"/><path d="M5.200 8h5.600"/></svg>
<div class="abs" style="left:1184px;top:457px;width:99px;height:4px;border-radius:2px;background:#3d3c43"></div>
<div class="abs" style="left:1184px;top:457px;width:8px;height:4px;border-radius:2px;background:#f2f2f5"></div>
<div class="abs" style="left:1186.500px;top:453px;width:12px;height:12px;border-radius:6px;background:#17161b;border:2.200px solid #fff"></div>
<!-- zoom plus -->
<svg style="left:1292px;top:451px" width="16" height="16" viewBox="0 0 16 16" fill="none" stroke="#ececf0" stroke-width="1.300" stroke-linecap="round"><circle cx="8" cy="8" r="7.200"/><path d="M5.200 8h5.600M8 5.200v5.600"/></svg>

<div class="rl" style="left:352px">0:01</div>
<div class="rl" style="left:555px">0:02</div>
<div class="rl" style="left:758px">0:03</div>
<div class="rl" style="left:961px">0:04</div>
<div class="rl" style="left:1164px">0:05</div>
<div class="abs" style="left:161px;top:499.500px;width:1158px;height:1px;background:#25262f"></div>
<div class="abs" style="left:160.5px;top:490px;width:1px;height:12px;background:#4a4b55"></div>
<div class="abs" style="left:201.1px;top:494.500px;width:1px;height:6px;background:#3c3d47"></div>
<div class="abs" style="left:241.7px;top:494.500px;width:1px;height:6px;background:#3c3d47"></div>
<div class="abs" style="left:282.3px;top:494.500px;width:1px;height:6px;background:#3c3d47"></div>
<div class="abs" style="left:322.9px;top:494.500px;width:1px;height:6px;background:#3c3d47"></div>
<div class="abs" style="left:363.5px;top:490px;width:1px;height:12px;background:#4a4b55"></div>
<div class="abs" style="left:404.1px;top:494.500px;width:1px;height:6px;background:#3c3d47"></div>
<div class="abs" style="left:444.7px;top:494.500px;width:1px;height:6px;background:#3c3d47"></div>
<div class="abs" style="left:485.3px;top:494.500px;width:1px;height:6px;background:#3c3d47"></div>
<div class="abs" style="left:525.9px;top:494.500px;width:1px;height:6px;background:#3c3d47"></div>
<div class="abs" style="left:566.5px;top:490px;width:1px;height:12px;background:#4a4b55"></div>
<div class="abs" style="left:607.1px;top:494.500px;width:1px;height:6px;background:#3c3d47"></div>
<div class="abs" style="left:647.7px;top:494.500px;width:1px;height:6px;background:#3c3d47"></div>
<div class="abs" style="left:688.3px;top:494.500px;width:1px;height:6px;background:#3c3d47"></div>
<div class="abs" style="left:728.9px;top:494.500px;width:1px;height:6px;background:#3c3d47"></div>
<div class="abs" style="left:769.5px;top:490px;width:1px;height:12px;background:#4a4b55"></div>
<div class="abs" style="left:810.1px;top:494.500px;width:1px;height:6px;background:#3c3d47"></div>
<div class="abs" style="left:850.7px;top:494.500px;width:1px;height:6px;background:#3c3d47"></div>
<div class="abs" style="left:891.3px;top:494.500px;width:1px;height:6px;background:#3c3d47"></div>
<div class="abs" style="left:931.9px;top:494.500px;width:1px;height:6px;background:#3c3d47"></div>
<div class="abs" style="left:972.5px;top:490px;width:1px;height:12px;background:#4a4b55"></div>
<div class="abs" style="left:1013.1px;top:494.500px;width:1px;height:6px;background:#3c3d47"></div>
<div class="abs" style="left:1053.7px;top:494.500px;width:1px;height:6px;background:#3c3d47"></div>
<div class="abs" style="left:1094.3px;top:494.500px;width:1px;height:6px;background:#3c3d47"></div>
<div class="abs" style="left:1134.9px;top:494.500px;width:1px;height:6px;background:#3c3d47"></div>
<div class="abs" style="left:1175.5px;top:490px;width:1px;height:12px;background:#4a4b55"></div>
<div class="abs" style="left:1216.1px;top:494.500px;width:1px;height:6px;background:#3c3d47"></div>
<div class="abs" style="left:1256.7px;top:494.500px;width:1px;height:6px;background:#3c3d47"></div>
<div class="abs" style="left:1297.3px;top:494.500px;width:1px;height:6px;background:#3c3d47"></div>

<!-- track header -->
<div class="abs" style="left:13px;top:623px;width:92px;height:60px;border-radius:4px;background:#202127"></div>
<div class="abs" style="left:116px;top:634px;width:39px;height:39px;border-radius:9px;background:#17181e;border:1px solid #2c2d35"></div>
<div class="t" style="left:123.500px;top:647.500px;font-size:11.500px;font-weight:bold;color:#e8e8ec">封面</div>
<!-- track icons -->
<svg style="left:28px;top:647.500px" width="10" height="9.500" viewBox="0 0 10 9.500" fill="none" stroke="#aeaeb6" stroke-width="1"><rect x=".5" y=".5" width="9" height="8.500" rx="2"/><path d="M3 .5v8.500M7 .5v8.500M3 4.750h4"/></svg>
<svg style="left:54.500px;top:648px" width="10" height="8.500" viewBox="0 0 10 8.500" fill="none" stroke="#aeaeb6" stroke-width="1"><path d="M.5 4.250C1.600 1.900 3.200.7 5 .7s3.400 1.200 4.500 3.550C8.400 6.600 6.800 7.800 5 7.800S1.600 6.600.5 4.250z"/><circle cx="5" cy="4.250" r="1.500"/></svg>
<svg style="left:79.500px;top:646.500px" width="12" height="11" viewBox="0 0 12 11" fill="none" stroke="#aeaeb6" stroke-width="1" stroke-linejoin="round" stroke-linecap="round"><path d="M.6 3.800h2.200L6.200.8v9.400L2.800 7.200H.6z"/><path d="M8 3.400c.8.900.8 3.300 0 4.200M9.800 1.800c1.800 2 1.800 5.400 0 7.400"/></svg>


<!-- clip -->
<div class="abs" id="clip" style="left:161px;top:625px;width:609px;height:56px;border-radius:3px;overflow:hidden;background:#5a3a9d"><svg width="609" height="39" style="left:0;top:0"><defs><filter id="ctr"><feColorMatrix type="saturate" values="1.0"/><feComponentTransfer><feFuncR type="linear" slope="1.12" intercept="0"/><feFuncG type="linear" slope="1.08" intercept="0"/><feFuncB type="linear" slope="1.05" intercept="0.01"/></feComponentTransfer></filter></defs><g filter="url(#ctr)"><use href="#city" x="0" y="0" width="70" height="39"/><use href="#city" x="70" y="0" width="70" height="39"/><use href="#city" x="140" y="0" width="70" height="39"/><use href="#city" x="210" y="0" width="70" height="39"/><use href="#city" x="280" y="0" width="70" height="39"/><use href="#city" x="350" y="0" width="70" height="39"/><use href="#city" x="420" y="0" width="70" height="39"/><use href="#city" x="490" y="0" width="70" height="39"/><use href="#city" x="560" y="0" width="70" height="39"/></g></svg></div>
<div class="abs" style="left:170px;top:629px;width:166px;height:22px;border-radius:6px;background:rgba(52,40,22,.78)"></div>
<svg style="left:175px;top:634px" width="13" height="11" viewBox="0 0 13 11" fill="none" stroke="#fff" stroke-width="1.100" stroke-linecap="round" stroke-linejoin="round"><path d="M9 .8H3A2.200 2.200 0 0 0 .8 3v5A2.200 2.200 0 0 0 3 10.200h6A2.200 2.200 0 0 0 11.200 8V5"/><path d="M2.600 9.600C3.400 6.400 6 4.400 11 4.400M6 10c.6-2 2.400-3 5-3"/><circle cx="3.800" cy="3.600" r=".7" fill="#fff"/></svg>
<div class="t" style="left:193px;top:634px;font-size:12px;color:#fff">0:03 T2I_2025_12_27(1)</div>

<!-- playhead -->
<div class="abs" style="left:769.5px;top:482px;width:1.5px;height:329px;background:#f4f4f6"></div>
<svg style="left:765px;top:478px" width="11" height="14" viewBox="0 0 11 14"><path d="M1.600 0h7.800A1.600 1.600 0 0 1 11 1.600v7.200L5.500 13.800 0 8.800V1.600A1.600 1.600 0 0 1 1.600 0z" fill="#fff"/></svg>
<div class="abs" style="left:760px;top:503px;width:21px;height:34.500px;border-radius:10.500px;background:#fff"></div>
<svg style="left:763.500px;top:509px" width="14" height="23" viewBox="0 0 14 23" fill="none" stroke="#2a2a30" stroke-width="1.100" stroke-linecap="round"><path d="M7 .6v2.600M7 5.400v3" /><path d="M1.800 7.800l7.600 9.200M12.200 7.800L4.600 17"/><circle cx="3.200" cy="18.600" r="2.100"/><circle cx="10.800" cy="18.600" r="2.100"/></svg>


<!-- ===== RED ANNOTATIONS ===== -->
<!-- folder badge -->
<div class="abs" style="left:274.500px;top:128.500px;width:17px;height:16px;border-radius:4.500px;background:#141218"></div>
<svg style="left:277px;top:131px" width="12" height="11" viewBox="0 0 12 11" fill="none" stroke="#f2f2f5" stroke-width="1.100" stroke-linejoin="round" stroke-linecap="round"><path d="M.6 2.600A1.400 1.400 0 0 1 2 1.200h2.400l1.200 1.200H10a1.400 1.400 0 0 1 1.400 1.400V9A1.400 1.400 0 0 1 10 10.400H2A1.400 1.400 0 0 1 .6 9z"/><path d="M4.200 6.600h3.600"/></svg>
<!-- plus badge -->
<div class="abs" style="left:275px;top:177px;width:16.500px;height:16.500px;border-radius:4px;background:#c26df5"></div>
<svg style="left:278.800px;top:180.800px" width="9" height="9" viewBox="0 0 9 9" stroke="#fff" stroke-width="1.600" stroke-linecap="round"><path d="M4.500 .9v7.200M.9 4.500h7.200"/></svg>
<!-- red circles & arrow -->
<svg style="left:0;top:0;pointer-events:none" width="1328" height="820" viewBox="0 0 1328 820">
<ellipse cx="281.800" cy="135.600" rx="14.700" ry="14.100" fill="none" stroke="#e8463c" stroke-width="3"/>
<ellipse cx="283.800" cy="184.600" rx="17.200" ry="16.900" fill="none" stroke="#e8463c" stroke-width="3"/>
<path d="M287.600 204.500L289.400 204L369.200 586.800L374.200 585.400L369.800 605.500L355.400 590.600L360.400 589.200z" fill="#ff4a3d"/>
</svg>

</body>
</html>
